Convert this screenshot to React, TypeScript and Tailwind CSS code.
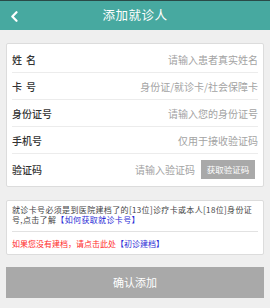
import React from 'react'

const font = { fontFamily: '"Noto Sans CJK SC", "Noto Sans", sans-serif' }

interface Field {
  label: string[]
  placeholder: string
}

const fields: Field[] = [
  { label: ['姓', '名'], placeholder: '请输入患者真实姓名' },
  { label: ['卡', '号'], placeholder: '身份证/就诊卡/社会保障卡' },
  { label: ['身份证号'], placeholder: '请输入您的身份证号' },
  { label: ['手机号'], placeholder: '仅用于接收验证码' },
]

export default function App() {
  return (
    <div className="w-[270px] h-[308px] bg-[#efefef] overflow-hidden" style={font}>
      {/* header */}
      <div className="relative h-[30px] bg-[#47a9a0] border-t border-[#2a4a47] flex items-center justify-center">
        <svg className="absolute left-[10px] top-[10px]" width="9" height="11" viewBox="0 0 9 11">
          <path d="M6.5 1.2 L2.3 5.5 L6.5 9.8" fill="none" stroke="#fff" strokeWidth="2.2" strokeLinecap="round" strokeLinejoin="round" />
        </svg>
        <span className="text-white text-[12.5px] leading-none tracking-[0.5px]">添加就诊人</span>
      </div>

      {/* form card */}
      <div className="mx-[6px] mt-[13px] bg-white border border-[#dcdcdc] rounded-[2px] px-[5px] py-[2px]">
        {fields.map((f) => (
          <div key={f.placeholder} className="h-[27px] flex items-center justify-between border-b border-[#ececec]">
            <span className="flex gap-[4px] text-[10px] text-[#333] font-medium">
              {f.label.map((c) => (
                <span key={c}>{c}</span>
              ))}
            </span>
            <span className="text-[10px] text-[#a3a3a3]">{f.placeholder}</span>
          </div>
        ))}
        <div className="h-[30px] flex items-center justify-between">
          <span className="text-[10px] text-[#333] font-medium">验证码</span>
          <div className="flex items-center gap-[6px]">
            <span className="text-[10px] text-[#a3a3a3]">请输入验证码</span>
            <button
              type="button"
              className="w-[54px] h-[19px] mr-[3px] bg-[#a9a9a9] text-white text-[8.5px] leading-none flex items-center justify-center"
            >
              获取验证码
            </button>
          </div>
        </div>
      </div>

      {/* notice card */}
      <div className="mx-[6px] mt-[13px] bg-white border border-[#dcdcdc] rounded-[2px] px-[5px] pt-[4px] pb-[5px]">
        <p className="text-[8px] leading-[10px] text-[#444] tracking-[0.35px]">
          就诊卡号必须是到医院建档了的[13位]诊疗卡或本人[18位]身份证
          <br />
          号,点击了解<span className="text-[#2b2bd6]">【如何获取就诊卡号】</span>
        </p>
        <div className="mt-[6px] border-t border-[#e2e2e2]" />
        <p className="mt-[7px] text-[8px] leading-[10px] text-[#ff2a2a]">
          如果您没有建档，请点击此处<span className="text-[#2b2bd6]">【初诊建档】</span>
        </p>
      </div>

      <button
        type="button"
        className="mx-[6px] mt-[12px] w-[258px] h-[31px] bg-[#a9a9a9] text-white text-[11px] flex items-center justify-center"
      >
        确认添加
      </button>
    </div>
  )
}
